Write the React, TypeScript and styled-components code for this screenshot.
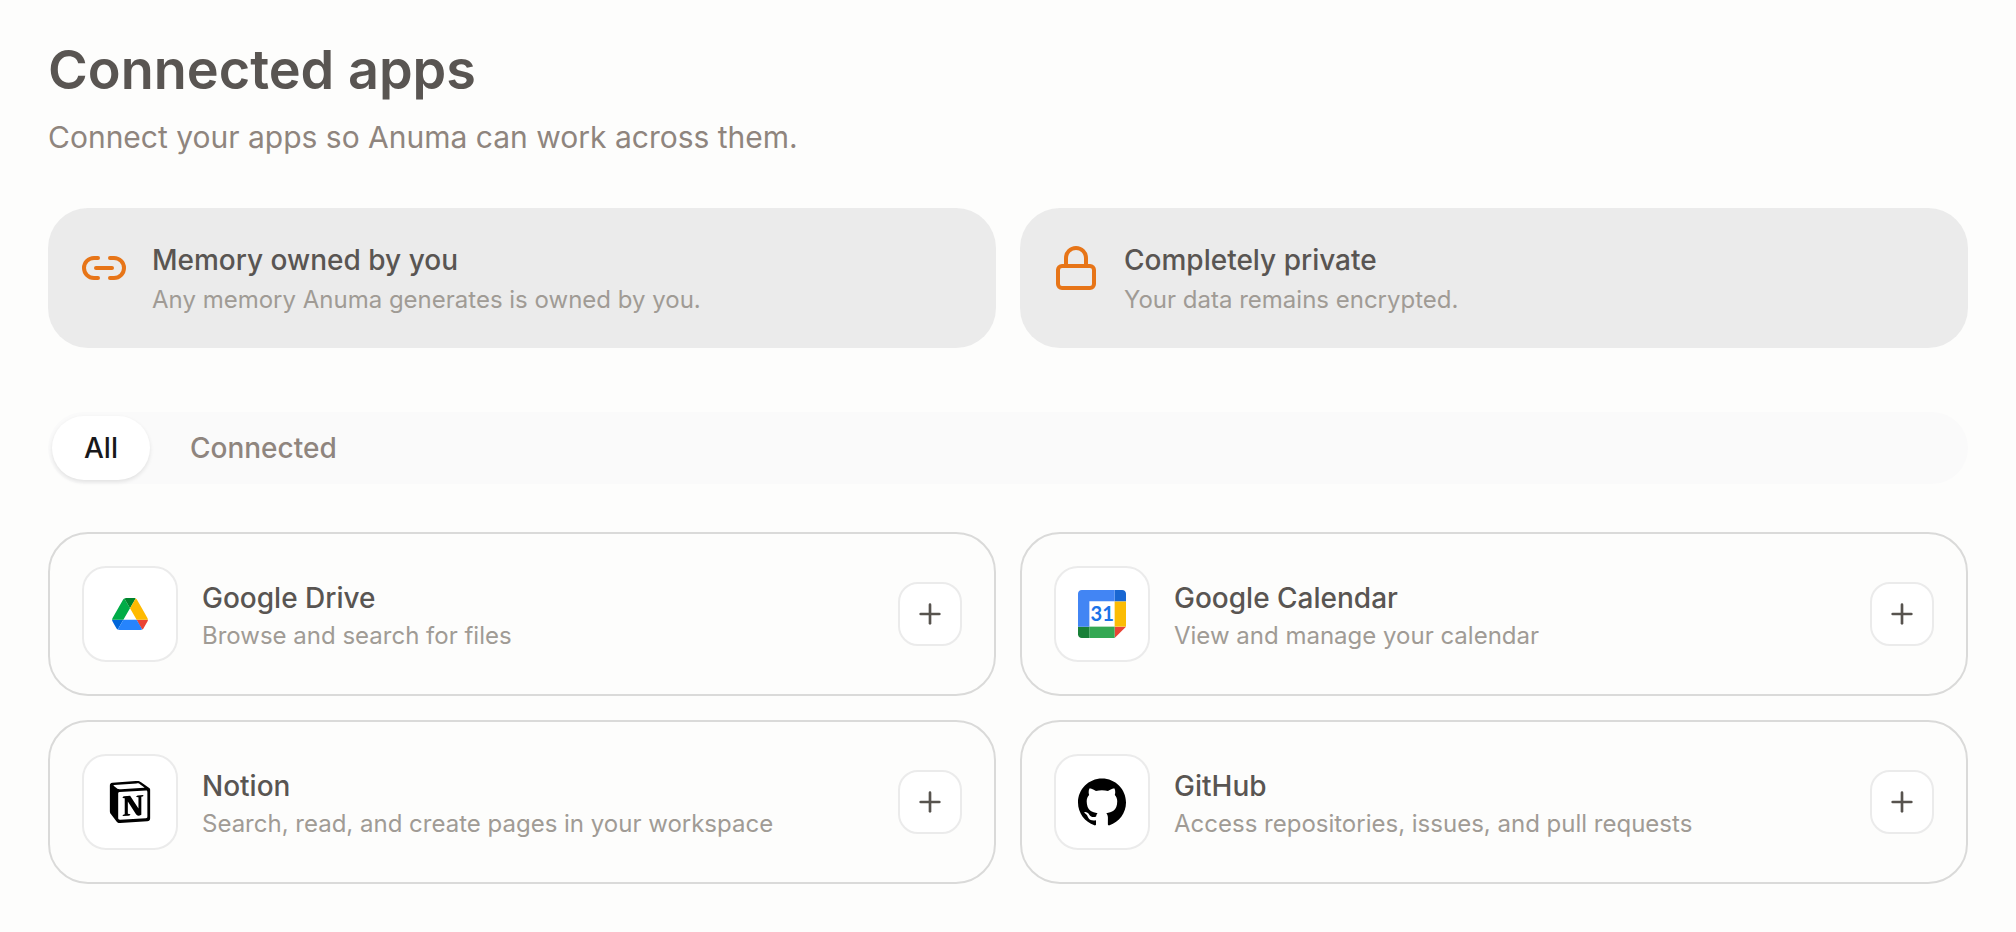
import React, { useState } from "react";
import styled, { createGlobalStyle } from "styled-components";
import { Link2, Lock, Plus } from "lucide-react";
import { SiGithub, SiNotion } from "react-icons/si";

const GlobalStyle = createGlobalStyle`
  *, *::before, *::after { box-sizing: border-box; }
  body {
    margin: 0;
    background: #fdfdfc;
    color: #595552;
    font-family: Inter, "Liberation Sans", sans-serif;
  }
  button { font: inherit; cursor: pointer; }
`;

const Page = styled.main`
  padding: 36px 48px 48px;
`;

const Heading = styled.h1`
  margin: 0;
  font-size: 54px;
  line-height: 68px;
  font-weight: 600;
`;

const Lead = styled.p`
  margin: 12px 0 0;
  font-size: 30px;
  line-height: 42px;
  color: #8f857e;
`;

const Grid = styled.section`
  display: grid;
  grid-template-columns: repeat(2, minmax(0, 1fr));
  gap: 24px;
`;

const Notes = styled(Grid)`
  margin: 50px 0 64px;
`;

const Note = styled.article`
  display: flex;
  gap: 24px;
  padding: 32px;
  border-radius: 40px;
  background: #ebebeb;
`;

const NoteIcon = styled.span`
  display: flex;
  flex: none;
  padding-top: 4px;
  color: #e77518;
`;

const TextBlock = styled.div`
  flex: 1;
  min-width: 0;
`;

const Title = styled.h2`
  margin: 0;
  font-size: 28px;
  line-height: 40px;
  font-weight: 500;
`;

const AppName = styled(Title)`
  line-height: 44px;
`;

const Description = styled.p<{ $spaced?: boolean }>`
  margin: ${(p) => (p.$spaced ? 4 : 0)}px 0 0;
  font-size: 24px;
  line-height: 32px;
  color: #a09b95;
`;

const Tabs = styled.div`
  display: flex;
  gap: 8px;
  margin-bottom: 48px;
  padding: 4px;
  border-radius: 36px;
  background: #fafafa;
`;

const Tab = styled.button<{ $active: boolean }>`
  height: 64px;
  padding: 0 32px;
  border: 0;
  border-radius: 32px;
  background: ${(p) => (p.$active ? "#ffffff" : "transparent")};
  box-shadow: ${(p) => (p.$active ? "0 2px 4px rgba(0, 0, 0, 0.1)" : "none")};
  color: ${(p) => (p.$active ? "#18181b" : "#8f857e")};
  font-size: 28px;
  line-height: 40px;
  font-weight: 500;
`;

const AppCard = styled.article`
  display: flex;
  align-items: center;
  gap: 24px;
  padding: 32px;
  border: 2px solid #dadad9;
  border-radius: 40px;
`;

const Logo = styled.span`
  display: flex;
  flex: none;
  align-items: center;
  justify-content: center;
  width: 96px;
  height: 96px;
  border: 2px solid #ebebeb;
  border-radius: 24px;
  background: #ffffff;
  color: #000000;
`;

const AddButton = styled.button`
  display: flex;
  flex: none;
  align-items: center;
  justify-content: center;
  width: 64px;
  height: 64px;
  padding: 0;
  border: 2px solid #ebebeb;
  border-radius: 20px;
  background: #ffffff;
  color: #57534e;
`;

const DriveLogo = () => (
  <svg width="36" height="32" viewBox="0 0 87.3 78" aria-hidden="true">
    <path fill="#0066da" d="m6.6 66.85 3.85 6.65c.8 1.4 1.95 2.5 3.3 3.3l13.75-23.8h-27.5c0 1.55.4 3.1 1.2 4.5z" />
    <path fill="#00ac47" d="m43.65 25-13.75-23.8c-1.35.8-2.5 1.9-3.3 3.3l-25.4 44a9.06 9.06 0 0 0 -1.2 4.5h27.5z" />
    <path fill="#ea4335" d="m73.55 76.8c1.35-.8 2.5-1.9 3.3-3.3l1.6-2.75 7.65-13.25c.8-1.4 1.2-2.95 1.2-4.5h-27.502l5.852 11.5z" />
    <path fill="#00832d" d="m43.65 25 13.75-23.8c-1.35-.8-2.9-1.2-4.5-1.2h-18.5c-1.6 0-3.15.45-4.5 1.2z" />
    <path fill="#2684fc" d="m59.8 53h-32.3l-13.75 23.8c1.35.8 2.9 1.2 4.5 1.2h50.8c1.6 0 3.15-.45 4.5-1.2z" />
    <path fill="#ffba00" d="m73.4 26.5-12.7-22c-.8-1.4-1.95-2.5-3.3-3.3l-13.75 23.8 16.15 28h27.45c0-1.55-.4-3.1-1.2-4.5z" />
  </svg>
);

const CalendarLogo = () => (
  <svg width="48" height="48" viewBox="0 0 200 200" aria-hidden="true">
    <path fill="#ffffff" d="M47 47h106v106H47z" />
    <path fill="#ea4335" d="M152.637 200 200 152.637h-47.363z" />
    <path fill="#fbbc04" d="M200 47.363h-47.363v105.274H200z" />
    <path fill="#34a853" d="M152.637 152.637H47.363V200h105.274z" />
    <path fill="#188038" d="M0 152.637v31.575C0 192.939 7.061 200 15.788 200h31.575v-47.363z" />
    <path fill="#1967d2" d="M200 47.363V15.788C200 7.061 192.939 0 184.212 0h-31.575v47.363z" />
    <path fill="#4285f4" d="M152.637 0H15.788C7.061 0 0 7.061 0 15.788v136.849h47.363V47.363h105.274z" />
    <text x="101" y="131" textAnchor="middle" fontFamily="Lato, sans-serif" fontSize="84" fontWeight="700" fill="#1a73e8">31</text>
  </svg>
);

const notes = [
  { title: "Memory owned by you", text: "Any memory Anuma generates is owned by you.", Icon: Link2 },
  { title: "Completely private", text: "Your data remains encrypted.", Icon: Lock },
];

const apps = [
  { name: "Google Drive", text: "Browse and search for files", logo: <DriveLogo /> },
  { name: "Google Calendar", text: "View and manage your calendar", logo: <CalendarLogo /> },
  { name: "Notion", text: "Search, read, and create pages in your workspace", logo: <SiNotion size={42} /> },
  { name: "GitHub", text: "Access repositories, issues, and pull requests", logo: <SiGithub size={48} /> },
];

export default function App() {
  const [tab, setTab] = useState("All");

  return (
    <>
      <GlobalStyle />
      <Page>
        <header>
          <Heading>Connected apps</Heading>
          <Lead>Connect your apps so Anuma can work across them.</Lead>
        </header>

        <Notes>
          {notes.map(({ title, text, Icon }) => (
            <Note key={title}>
              <NoteIcon><Icon size={48} /></NoteIcon>
              <TextBlock>
                <Title>{title}</Title>
                <Description $spaced>{text}</Description>
              </TextBlock>
            </Note>
          ))}
        </Notes>

        <Tabs role="tablist">
          {["All", "Connected"].map((name) => (
            <Tab
              key={name}
              type="button"
              role="tab"
              aria-selected={tab === name}
              $active={tab === name}
              onClick={() => setTab(name)}
            >
              {name}
            </Tab>
          ))}
        </Tabs>

        <Grid>
          {apps.map(({ name, text, logo }) => (
            <AppCard key={name}>
              <Logo>{logo}</Logo>
              <TextBlock>
                <AppName>{name}</AppName>
                <Description>{text}</Description>
              </TextBlock>
              <AddButton type="button" aria-label={`Connect ${name}`}>
                <Plus size={32} />
              </AddButton>
            </AppCard>
          ))}
        </Grid>
      </Page>
    </>
  );
}
